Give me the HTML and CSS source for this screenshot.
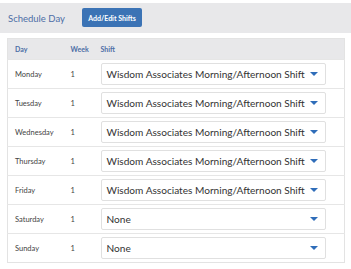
FILE: index.html
```html
<!DOCTYPE html>
<html lang="en">
<head>
  <meta charset="UTF-8" />
  <title>Schedule Day</title>
  <link rel="stylesheet" href="styles.css">
</head>
<body>
  <div class="page-header">
    <div class="page-title">Schedule Day</div>
    <button class="primary-btn">Add/Edit Shifts</button>
  </div>

  <table class="schedule">
    <thead>
      <tr><th class="col-day">Day</th><th class="col-week">Week</th><th class="col-shift">Shift</th></tr>
    </thead>
    <tbody>
      <tr><td>Monday</td><td>1</td><td><div class="select"><span>Wisdom Associates Morning/Afternoon Shift</span><i class="caret"></i></div></td></tr>
      <tr><td>Tuesday</td><td>1</td><td><div class="select"><span>Wisdom Associates Morning/Afternoon Shift</span><i class="caret"></i></div></td></tr>
      <tr><td>Wednesday</td><td>1</td><td><div class="select"><span>Wisdom Associates Morning/Afternoon Shift</span><i class="caret"></i></div></td></tr>
      <tr><td>Thursday</td><td>1</td><td><div class="select"><span>Wisdom Associates Morning/Afternoon Shift</span><i class="caret"></i></div></td></tr>
      <tr><td>Friday</td><td>1</td><td><div class="select"><span>Wisdom Associates Morning/Afternoon Shift</span><i class="caret"></i></div></td></tr>
      <tr><td>Saturday</td><td>1</td><td><div class="select"><span>None</span><i class="caret"></i></div></td></tr>
      <tr><td>Sunday</td><td>1</td><td><div class="select"><span>None</span><i class="caret"></i></div></td></tr>
    </tbody>
  </table>
</body>
</html>
```

FILE: styles.css
```css
* { margin: 0; padding: 0; box-sizing: border-box; }
body { font-family: Lato, 'Open Sans', sans-serif; background: #fff; color: #444; }

.page-header { margin-top: 3px; height: 30px; background: #e8e8ea;
  display: flex; align-items: center; padding-left: 8px;
}
.page-title { font-size: 9.5px; color: #4d6ea6; width: 74px; }
.primary-btn { background: #3b73b5; color: #fff; border: none; border-radius: 2px;
  width: 60px; height: 19px; font-family: inherit; font-size: 7px; font-weight: 700;
  margin-top: -1px;
}

.schedule { margin: 5px 0 0 7px; width: 338px; border-collapse: collapse;
  border: 1px solid #e3e3e3; table-layout: fixed;
}
.schedule th { background: #e8e8ea; height: 21px; text-align: left; font-size: 7px;
  font-weight: 700; color: #4d6ea6; padding-left: 7px;
}
.col-day { width: 56px; }
.col-week { width: 30px; }
.schedule td { height: 29px; border-top: 1px solid #e6e6e6; font-size: 7.5px; color: #444;
  padding-left: 7px; vertical-align: middle;
}
.select { width: 225px; height: 22px; border: 1px solid #e0e0e0; border-radius: 2px;
  background: #fff; display: flex; align-items: center; justify-content: space-between;
  padding: 0 6px 0 5px; font-size: 10.1px; color: #333; white-space: nowrap;
}
.caret { width: 0; height: 0; border-left: 4px solid transparent; border-right: 4px solid transparent;
  border-top: 4.5px solid #2f6db9; margin-right: 1px; flex-shrink: 0;
}
```
